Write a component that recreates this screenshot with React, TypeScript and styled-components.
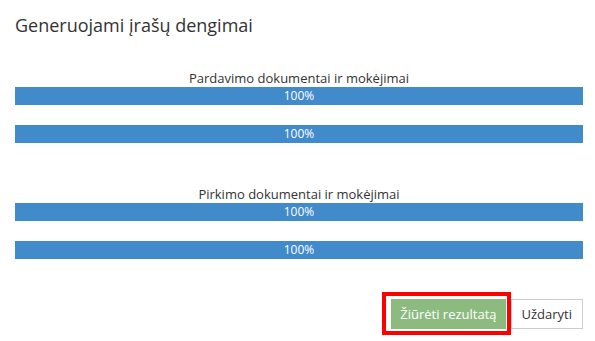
import styled, { createGlobalStyle } from "styled-components";

const GlobalStyle = createGlobalStyle`
  html, body {
    margin: 0;
    padding: 0;
    background: #fff;
  }
  body {
    font-family: "Open Sans", "Liberation Sans", sans-serif;
    font-size: 13px;
    color: #333;
  }
`;

const Modal = styled.div`
  width: 595px;
  height: 341px;
  background: #fff;
  display: flex;
  flex-direction: column;
`;

const Header = styled.div`
  padding: 15px 15px 14px;
`;

const Title = styled.h4`
  margin: 0;
  font-size: 18px;
  font-weight: 400;
  line-height: 21px;
  color: #333;
`;

const Body = styled.div`
  padding: 19px 12px 0 15px;
  display: flex;
  flex-direction: column;
  gap: 42px;
`;

const Section = styled.div`
  display: flex;
  flex-direction: column;
`;

const Label = styled.div`
  text-align: center;
  line-height: 18px;
  font-size: 13px;
  color: #333;
`;

const Bars = styled.div`
  display: flex;
  flex-direction: column;
  gap: 20px;
`;

const Progress = styled.div`
  height: 18px;
  background: #f5f5f5;
  overflow: hidden;
`;

const ProgressBar = styled.div`
  height: 100%;
  background: #428bca;
  color: #fff;
  font-size: 12px;
  line-height: 18px;
  text-align: center;
`;

const Footer = styled.div`
  margin-top: 40px;
  padding: 0 12px 0 15px;
  display: flex;
  justify-content: flex-end;
  gap: 5px;
`;

const Button = styled.button<{ $primary?: boolean }>`
  font-family: "Open Sans", "Liberation Sans", sans-serif;
  font-size: 13px;
  line-height: 18px;
  padding: 5px ${(p) => (p.$primary ? "8px" : "10px")};
  border: 1px solid ${(p) => (p.$primary ? "#8dbb7f" : "#ccc")};
  background: ${(p) => (p.$primary ? "#8dbb7f" : "#fff")};
  color: ${(p) => (p.$primary ? "#fff" : "#333")};
  border-radius: 0;
  cursor: pointer;
`;

const Highlight = styled.span`
  position: relative;
  display: inline-flex;

  &::after {
    content: "";
    position: absolute;
    left: -9px;
    right: -5px;
    top: -7px;
    bottom: -6px;
    border: 4px solid #f00;
    pointer-events: none;
  }
`;

const sections = [
  { title: "Pardavimo dokumentai ir mokėjimai", values: [100, 100] },
  { title: "Pirkimo dokumentai ir mokėjimai", values: [100, 100] },
];

export default function App() {
  return (
    <>
      <GlobalStyle />
      <Modal>
        <Header>
          <Title>Generuojami įrašų dengimai</Title>
        </Header>
        <Body>
          {sections.map((s) => (
            <Section key={s.title}>
              <Label>{s.title}</Label>
              <Bars>
                {s.values.map((v, i) => (
                  <Progress key={i}>
                    <ProgressBar style={{ width: `${v}%` }}>{v}%</ProgressBar>
                  </Progress>
                ))}
              </Bars>
            </Section>
          ))}
        </Body>
        <Footer>
          <Highlight>
            <Button $primary>Žiūrėti rezultatą</Button>
          </Highlight>
          <Button>Uždaryti</Button>
        </Footer>
      </Modal>
    </>
  );
}
